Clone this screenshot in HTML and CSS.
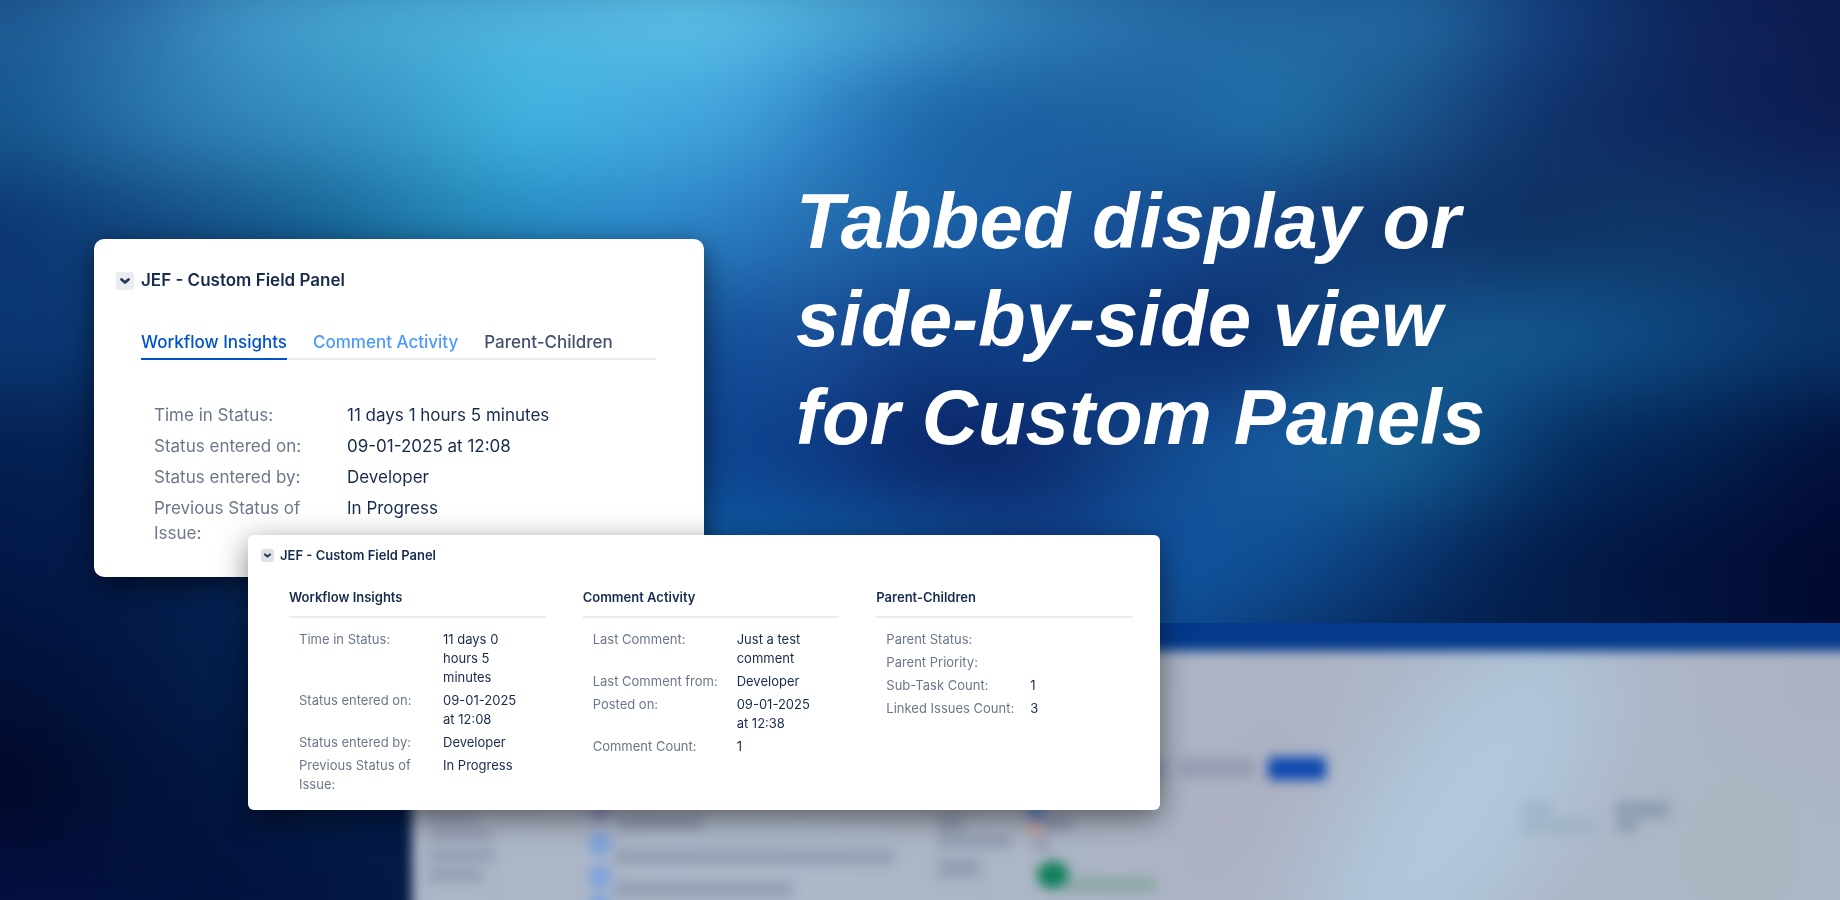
FILE: index.html
```
<!DOCTYPE html>
<html lang="en">
  <head>
    <meta charset="UTF-8" />
    <meta name="viewport" content="width=device-width, initial-scale=1.0" />
    <title>JEF - Custom Field Panel</title>
    <link rel="stylesheet" href="styles.css">
  </head>
  <body>
    <div class="backdrop" aria-hidden="true">
      <div class="waves">
        <div class="wave wave-1"></div>
        <div class="wave wave-2"></div>
        <div class="wave wave-3"></div>
        <div class="wave wave-4"></div>
        <div class="wave wave-5"></div>
        <div class="wave wave-6"></div>
        <div class="wave wave-7"></div>
        <div class="wave wave-8"></div>
        <div class="wave wave-9"></div>
      </div>
      <!-- out of focus app window -->
      <svg class="app-window" viewBox="0 0 1840 900" preserveAspectRatio="none">
        <defs>
          <filter id="soft" x="-20%" y="-60%" width="140%" height="220%" color-interpolation-filters="sRGB"><feGaussianBlur stdDeviation="6" /></filter>
          <filter id="glow" x="-100%" y="-100%" width="300%" height="300%" color-interpolation-filters="sRGB"><feGaussianBlur stdDeviation="50" /></filter>
          <clipPath id="window-clip"><rect x="380" y="623" width="1460" height="277" /></clipPath>
          <clipPath id="sheet-clip"><rect x="412" y="651" width="1500" height="300" /></clipPath>
        </defs>
        <g clip-path="url(#window-clip)">
          <g filter="url(#soft)">
            <rect x="412" y="590" width="1500" height="80" fill="#043a8c" />
            <g clip-path="url(#sheet-clip)">
              <rect x="412" y="651" width="1500" height="300" fill="#adb6c6" />
              <g filter="url(#glow)">
                <ellipse cx="1250" cy="800" rx="50" ry="150" transform="rotate(30 1250 800)" fill="#adafc0" />
                <ellipse cx="1830" cy="680" rx="80" ry="60" fill="#adafc0" />
                <ellipse cx="1460" cy="810" rx="90" ry="220" transform="rotate(35 1460 810)" fill="#b0c8de" />
                <ellipse cx="740" cy="870" rx="160" ry="50" fill="#aebacb" />
                <ellipse cx="1740" cy="850" rx="70" ry="90" fill="#abb6c1" />
              </g>
            </g>
          </g>
          <g filter="url(#soft)" fill="#8c95ab" opacity="0.7">
            <rect x="428" y="812" width="50" height="10" />
            <rect x="430" y="828" width="62" height="12" />
            <rect x="428" y="848" width="66" height="14" />
            <rect x="428" y="868" width="54" height="14" />
            <rect x="618" y="814" width="84" height="16" />
            <rect x="614" y="849" width="280" height="16" />
            <rect x="614" y="881" width="178" height="16" />
            <rect x="938" y="814" width="26" height="18" />
            <rect x="938" y="834" width="74" height="14" />
            <rect x="938" y="858" width="42" height="20" />
            <rect x="1040" y="814" width="32" height="18" />
            <rect x="1034" y="838" width="16" height="14" />
            <rect x="1138" y="760" width="28" height="18" />
            <rect x="1180" y="758" width="74" height="20" />
          </g>
          <g filter="url(#soft)">
            <circle cx="600" cy="812" r="10" fill="#8f8fc0" />
            <circle cx="600" cy="844" r="12" fill="#7ea3dc" />
            <circle cx="600" cy="877" r="12" fill="#7ea3dc" />
            <circle cx="600" cy="906" r="12" fill="#7ea3dc" />
            <rect x="1028" y="808" width="16" height="10" fill="#4a7bd0" />
            <rect x="1028" y="822" width="14" height="12" fill="#c99a9a" />
            <ellipse cx="1053" cy="875" rx="16" ry="14" fill="#12805c" />
            <rect x="1066" y="877" width="90" height="16" fill="#8ea8a8" />
            <rect x="1268" y="757" width="58" height="23" rx="4" fill="#1049b0" />
            <rect x="1522" y="803" width="30" height="12" fill="#9db1c8" />
            <rect x="1522" y="819" width="74" height="14" fill="#9fb2c6" />
            <rect x="1616" y="802" width="54" height="16" fill="#8b9eb0" />
            <rect x="1616" y="820" width="22" height="12" fill="#8b9eb0" />
          </g>
        </g>
      </svg>
    </div>

    <main class="slide">
      <div class="intro">
        <section class="card tabbed-card">
          <header class="card-header">
            <button class="toggle" type="button" aria-label="Collapse panel">
              <svg viewBox="0 0 18 18"><path d="M5.500 7.500 9 10.500l3.500-3" /></svg>
            </button>
            <h2>JEF - Custom Field Panel</h2>
          </header>
          <div class="tabs" role="tablist">
            <button class="tab active" type="button" role="tab" aria-selected="true">Workflow Insights</button>
            <button class="tab hovered" type="button" role="tab">Comment Activity</button>
            <button class="tab" type="button" role="tab">Parent-Children</button>
          </div>
          <dl class="fields">
            <dt>Time in Status:</dt>
            <dd>11 days 1 hours 5 minutes</dd>
            <dt>Status entered on:</dt>
            <dd>09-01-2025 at 12:08</dd>
            <dt>Status entered by:</dt>
            <dd>Developer</dd>
            <dt>Previous Status of Issue:</dt>
            <dd>In Progress</dd>
          </dl>
        </section>
        <h1>Tabbed display or<br>side-by-side view<br>for Custom Panels</h1>
      </div>

      <section class="card columns-card">
        <header class="card-header">
          <button class="toggle" type="button" aria-label="Collapse panel">
            <svg viewBox="0 0 18 18"><path d="M5.500 7.500 9 10.500l3.500-3" /></svg>
          </button>
          <h2>JEF - Custom Field Panel</h2>
        </header>
        <div class="columns">
          <div class="column">
            <h3>Workflow Insights</h3>
            <dl class="fields">
              <dt>Time in Status:</dt>
              <dd>11 days 0 hours 5 minutes</dd>
              <dt>Status entered on:</dt>
              <dd>09-01-2025 at 12:08</dd>
              <dt>Status entered by:</dt>
              <dd>Developer</dd>
              <dt>Previous Status of Issue:</dt>
              <dd>In Progress</dd>
            </dl>
          </div>
          <div class="column">
            <h3>Comment Activity</h3>
            <dl class="fields">
              <dt>Last Comment:</dt>
              <dd>Just a test comment</dd>
              <dt>Last Comment from:</dt>
              <dd>Developer</dd>
              <dt>Posted on:</dt>
              <dd>09-01-2025 at 12:38</dd>
              <dt>Comment Count:</dt>
              <dd>1</dd>
            </dl>
          </div>
          <div class="column">
            <h3>Parent-Children</h3>
            <dl class="fields">
              <dt>Parent Status:</dt>
              <dd></dd>
              <dt>Parent Priority:</dt>
              <dd></dd>
              <dt>Sub-Task Count:</dt>
              <dd>1</dd>
              <dt>Linked Issues Count:</dt>
              <dd>3</dd>
            </dl>
          </div>
        </div>
      </section>
    </main>
  </body>
</html>
```
FILE: styles.css
```
* {
  box-sizing: border-box;
}
body {
  margin: 0;
  min-height: 100vh;
  background: #04183f;
  color: #172b4d;
  font-family: "Inter", sans-serif;
}
h1,
h2,
h3,
dl,
dd {
  margin: 0;
}

/* background */
.backdrop {
  position: fixed;
  inset: 0;
  z-index: -1;
  overflow: hidden;
}
.waves {
  position: absolute;
  inset: -50px -5%;
  display: flex;
  flex-direction: column;
  filter: blur(40px);
}
.wave {
  flex: 1;
}
.wave-1 {
  background: linear-gradient(90deg, #1d5893 5%, #2f74b0 12%, #3f95c8 16%, #48aad6 23%, #57b9e3 34%, #5fc4ea 39%, #4fb0de 45%, #429ccf 50%, #2e7bb5 57%, #2368a3 65%, #2368a3 75%, #14407f 81%, #0f2860 87%, #0d1b50 95%);
}
.wave-2 {
  background: linear-gradient(90deg, #16568f 5%, #2f7fb7 14%, #3590c0 20%, #3a9ccb 25%, #40b8e4 31%, #44a9dd 36%, #40a2dc 41%, #2d80c3 46%, #1c67ab 50%, #1b60a0 55%, #1d65a2 63%, #2073ac 67%, #1a5288 75%, #10356f 80%, #0e285f 86%, #0d1c50 95%);
}
.wave-3 {
  background: linear-gradient(90deg, #0a3573 5%, #134a80 13%, #156498 21%, #2180ae 26%, #2489bf 30%, #2d8acb 36%, #2a7cc0 41%, #2369ac 46%, #1b62a8 50%, #1858a0 57%, #15468a 65%, #0f356e 73%, #0e2f60 80%, #103868 86%, #0f2f68 95%);
}
.wave-4 {
  background: linear-gradient(90deg, #0a3874 5%, #0a3570 13%, #12509a 39%, #1a4f98 45%, #0f3c82 50%, #0f428a 55%, #0b3478 59%, #0a2a6c 65%, #15508a 73%, #155a92 79%, #105088 84%, #0a3f76 90%, #093368 95%);
}
.wave-5 {
  background: linear-gradient(90deg, #041f50 5%, #052258 13%, #0f4592 39%, #0c3a84 45%, #0b2568 50%, #0b2568 55%, #114688 61%, #185ba2 67%, #166496 73%, #0c4880 78%, #042c60 82%, #03204f 89%, #020f3a 95%);
}
.wave-6 {
  background: linear-gradient(90deg, #021848 5%, #041c4c 13%, #0e5ea5 39%, #10529a 50%, #10408a 56%, #1155a2 62%, #0f4d92 68%, #0a3a78 73%, #042050 79%, #03133f 86%, #010930 95%);
}
.wave-7 {
  background: linear-gradient(90deg, #021038 5%, #031e4c 16%, #0a3068 41%, #104a8c 62%, #093068 68%, #04204d 75%, #041c48 84%, #010a30 95%);
}
.wave-8 {
  background: linear-gradient(90deg, #010828 5%, #02143c 12%, #031c48 23%, #05204d 77%, #020a34 95%);
}
.wave-9 {
  background: linear-gradient(90deg, #030f40 5%, #02103c 14%, #031a48 25%, #05204d 77%, #020a34 95%);
}
.app-window {
  position: absolute;
  inset: 0;
  width: 100%;
  height: 100%;
}

/* slide */
.slide {
  padding: 172px 94px 90px;
}
.intro {
  display: flex;
  align-items: flex-start;
  gap: 92px;
}
h1 {
  color: #fff;
  font: italic bold 78px/98px "Liberation Sans", Arial, sans-serif;
}
.card {
  background: #fff;
}
.card-header {
  display: flex;
  align-items: center;
}
.toggle {
  padding: 0;
  border: none;
  border-radius: 3px;
  background: #ebecf0;
  cursor: pointer;
}
.toggle svg {
  display: block;
  fill: none;
  stroke: #253858;
  stroke-width: 2.8;
  stroke-linecap: round;
  stroke-linejoin: round;
}
.fields {
  display: grid;
}
.fields dt {
  color: #6b778c;
}

/* tabbed view */
.tabbed-card {
  flex: 0 1 610px;
  min-height: 338px;
  margin-top: 67px;
  padding: 29px 48px 20px 22px;
  border-radius: 10px;
  box-shadow: 0 8px 28px rgba(0, 0, 0, 0.55);
  font-size: 17px;
  line-height: 25px;
}
.tabbed-card .card-header {
  gap: 7px;
}
.tabbed-card h2 {
  font-size: 17px;
  font-weight: 600;
}
.tabbed-card .toggle svg {
  width: 18px;
  height: 18px;
}
.tabs {
  display: flex;
  gap: 26px;
  margin: 37px 0 0 25px;
  border-bottom: 2px solid #ebecf0;
}
.tab {
  margin-bottom: -2px;
  padding: 0 0 3px;
  border: none;
  border-bottom: 2px solid transparent;
  background: none;
  color: #42526e;
  font: inherit;
  font-weight: 500;
  cursor: pointer;
}
.tab.active {
  border-color: #0052cc;
  color: #0052cc;
}
.tab.hovered {
  color: #4c9aff;
}
.tabbed-card .fields {
  grid-template-columns: 168px 1fr;
  gap: 6px 25px;
  margin: 43px 0 0 38px;
}

/* side by side view */
.columns-card {
  position: relative;
  max-width: 912px;
  min-height: 275px;
  margin: -42px 0 0 154px;
  padding: 11px 27px 15px 13px;
  border-radius: 6px;
  box-shadow: 0 8px 30px rgba(0, 0, 0, 0.5);
  font-size: 13px;
  line-height: 19px;
}
.columns-card .card-header {
  gap: 6px;
}
.columns-card h2,
.columns-card h3 {
  font-size: 13px;
  font-weight: 600;
}
.columns-card .toggle {
  background: #dfe1e6;
}
.columns-card .toggle svg {
  width: 13px;
  height: 13px;
}
.columns {
  display: grid;
  grid-template-columns: repeat(3, 1fr);
  gap: 37px;
  margin: 23px 0 0 28px;
}
.column h3 {
  padding-bottom: 9px;
  border-bottom: 2px solid #ebecf0;
}
.columns-card .fields {
  grid-template-columns: 130px 1fr;
  gap: 4px 14px;
  padding: 12px 20px 0 10px;
}

@media (max-width: 1300px) {
  .intro {
    flex-direction: column-reverse;
    gap: 0;
  }
  .slide {
    padding-top: 60px;
  }
  .columns-card {
    margin-left: 0;
    margin-top: 30px;
  }
}
```
